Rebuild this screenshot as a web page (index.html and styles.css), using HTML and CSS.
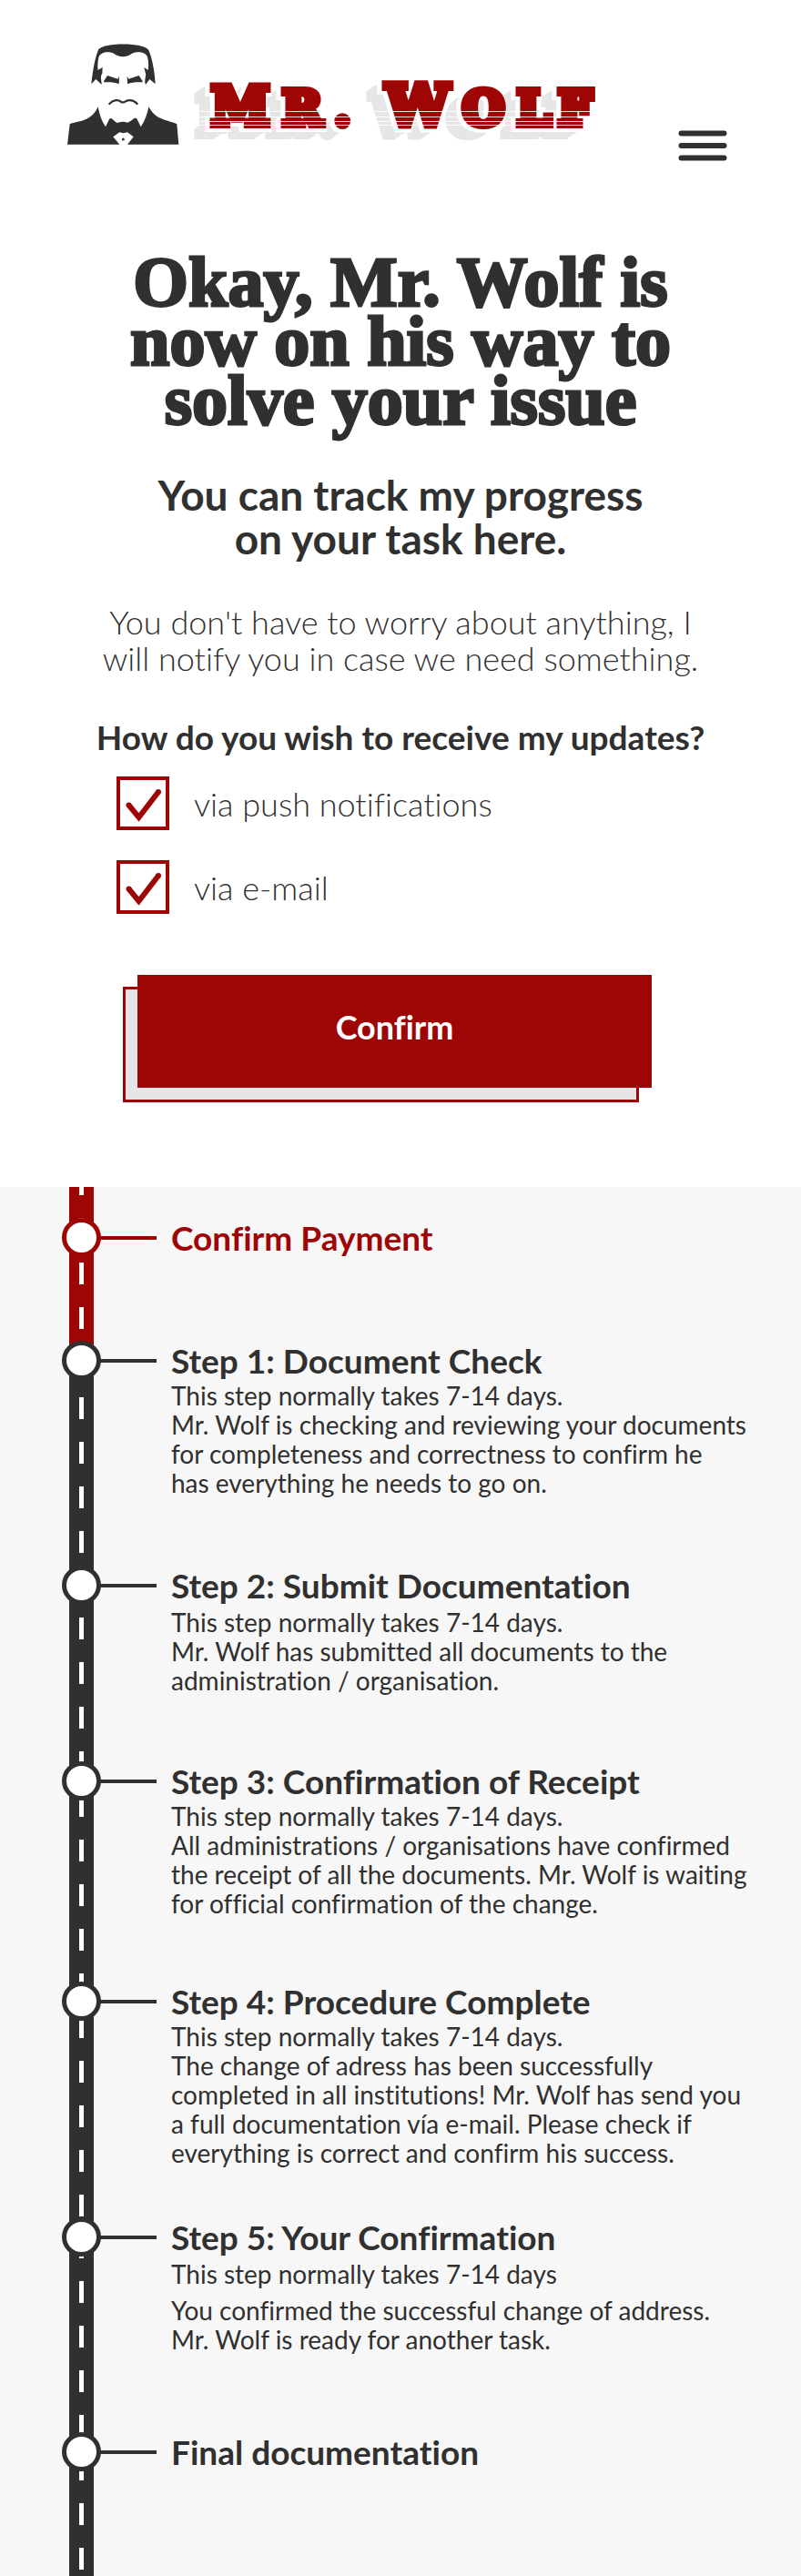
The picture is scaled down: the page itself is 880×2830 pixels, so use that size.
FILE: index.html
```html
<!DOCTYPE html>
<html lang="en">
<head>
<meta charset="utf-8">
<meta name="viewport" content="width=device-width, initial-scale=1">
<title>Mr. Wolf – Task progress</title>
<link rel="stylesheet" href="styles.css">
</head>
<body>
<header class="header">
  <a class="logo" href="#" aria-label="Mr. Wolf">
    <svg class="logo-art" viewBox="70 40 590 125" role="img" aria-label="Mr. Wolf">
      <defs>
        <text id="wordmark" class="wordmark"><tspan x="232" y="137">M</tspan><tspan class="small" x="310">R</tspan><tspan class="small" x="367">.</tspan><tspan class="big" x="424">W</tspan><tspan class="small" x="508">O</tspan><tspan class="small" x="568">L</tspan><tspan class="small" x="613">F</tspan></text>
      </defs>
      <g class="ink" transform="translate(60 40) scale(.3333)">
        <path d="M121 157C124 130 130 80 143 47C150 18 300 18 311 47C324 80 331 125 332 157L313 141L300 159C294 142 303 132 300 122L295 102L308 111C310 100 310 80 306 68C300 52 275 48 255 56C240 70 210 70 195 56C180 48 150 50 145 70C142 85 141 100 143 111L158 102L157 122C148 135 156 145 155 159L136 141Z"/>
        <path d="M162 148L174 129L208 140L213 131L212 157C195 150 178 150 162 151ZM290 148L278 129L244 140L239 131L240 157C257 150 274 150 290 151Z"/>
        <path class="mouth" d="M181 222C195 208 210 208 218 215Q226 220 234 214C250 206 262 212 272 222"/>
        <path fill-rule="evenodd" d="M50 289C80 278 120 282 143 232C148 258 155 280 168 298L180 273Q185 267 192 274Q200 283 207 285Q226 278 240 284Q250 281 258 273Q268 264 272 273L284 298C297 280 305 258 310 232C333 276 370 274 403 289L409 356H42ZM193 331L214 316Q226 321 240 316L260 331L240 356H214Z"/>
        <circle cx="226" cy="339" r="4.500"/>
      </g>
      <g class="shade">
        <use href="#wordmark" x="-7" y="5"/>
        <use href="#wordmark" x="-9" y="6"/>
        <use href="#wordmark" x="-11" y="7"/>
        <use href="#wordmark" x="-13" y="9"/>
        <use href="#wordmark" x="-15" y="10"/>
        <use href="#wordmark" x="-17" y="12"/>
      </g>
      <use class="gap" href="#wordmark" x="-2" y="1"/>
      <use class="face" href="#wordmark"/>
      <path class="stripes" d="M210 122.500H658M210 128.500H658M210 133.500H658M210 137.500H658"/>
    </svg>
  </a>
  <button class="menu" type="button" aria-label="Open menu">
    <svg viewBox="0 0 54 34" width="54" height="34" aria-hidden="true"><path d="M3.500 3.500H50.500M3.500 17H50.500M3.500 30.500H50.500"/></svg>
  </button>
</header>

<main>
  <section class="intro">
    <h1>Okay, Mr. Wolf is<br>now on his way to<br>solve your issue</h1>
    <h2>You can track my progress<br>on your task here.</h2>
    <p class="lead">You don't have to worry about anything, I<br>will notify you in case we need something.</p>
    <form class="updates">
      <fieldset>
        <legend>How do you wish to receive my updates?</legend>
        <label class="option">
          <span class="box"><input type="checkbox" checked><svg viewBox="0 0 58 58" aria-hidden="true"><path d="M13.500 31.500L24.500 45L46 17"/><circle cx="13.500" cy="31.500" r="3"/><circle cx="46" cy="17" r="3"/></svg></span>
          via push notifications
        </label>
        <label class="option">
          <span class="box"><input type="checkbox" checked><svg viewBox="0 0 58 58" aria-hidden="true"><path d="M13.500 31.500L24.500 45L46 17"/><circle cx="13.500" cy="31.500" r="3"/><circle cx="46" cy="17" r="3"/></svg></span>
          via e-mail
        </label>
      </fieldset>
      <button class="confirm" type="submit">Confirm</button>
    </form>
  </section>

  <ol class="timeline">
    <li class="step done">
      <div class="road"><span class="node"></span></div>
      <div class="info"><h3>Confirm Payment</h3></div>
    </li>
    <li class="step current">
      <div class="road"><span class="node"></span></div>
      <div class="info">
        <h3>Step 1: Document Check</h3>
        <p>This step normally takes 7-14 days.</p>
        <p>Mr. Wolf is checking and reviewing your documents<br>for completeness and correctness to confirm he<br>has everything he needs to go on.</p>
      </div>
    </li>
    <li class="step submit">
      <div class="road"><span class="node"></span></div>
      <div class="info">
        <h3>Step 2: Submit Documentation</h3>
        <p>This step normally takes 7-14 days.</p>
        <p>Mr. Wolf has submitted all documents to the<br>administration / organisation.</p>
      </div>
    </li>
    <li class="step receipt">
      <div class="road"><span class="node"></span></div>
      <div class="info">
        <h3>Step 3: Confirmation of Receipt</h3>
        <p>This step normally takes 7-14 days.</p>
        <p>All administrations / organisations have confirmed<br>the receipt of all the documents. Mr. Wolf is waiting<br>for official confirmation of the change.</p>
      </div>
    </li>
    <li class="step complete">
      <div class="road"><span class="node"></span></div>
      <div class="info">
        <h3>Step 4: Procedure Complete</h3>
        <p>This step normally takes 7-14 days.</p>
        <p>The change of adress has been successfully<br>completed in all institutions! Mr. Wolf has send you<br>a full documentation vía e-mail. Please check if<br>everything is correct and confirm his success.</p>
      </div>
    </li>
    <li class="step confirmation">
      <div class="road"><span class="node"></span></div>
      <div class="info">
        <h3>Step 5: Your Confirmation</h3>
        <p>This step normally takes 7-14 days</p>
        <p>You confirmed the successful change of address.<br>Mr. Wolf is ready for another task.</p>
      </div>
    </li>
    <li class="step final">
      <div class="road"><span class="node"></span></div>
      <div class="info"><h3>Final documentation</h3></div>
    </li>
  </ol>
</main>
</body>
</html>
```

FILE: styles.css
```css
:root {
  --ink: #303030;
  --red: #9e0505;
  --shade: #e6e6e6;
  --panel: #f7f7f7;
}

* { box-sizing: border-box; }

body {
  margin: 0;
  background: #fff;
  color: var(--ink);
  font-family: Lato, "Open Sans", sans-serif;
  font-variant-ligatures: no-common-ligatures;
}

h1, h2, h3, p, ol, fieldset { margin: 0; padding: 0; }

/* Header */
.header {
  display: flex;
  justify-content: space-between;
  align-items: flex-end;
  padding: 40px 81px 0 70px;
}

.logo { display: block; width: 590px; }
.logo-art { display: block; width: 100%; }
.ink { fill: var(--ink); }
.mouth { fill: none; stroke: var(--ink); stroke-width: 7; stroke-linecap: round; }

.wordmark {
  font-family: "DejaVu Serif", serif;
  font-weight: 700;
  font-size: 58px;
}
.wordmark .small { font-size: 53px; }
.wordmark .big { font-size: 62px; }
.face { fill: var(--red); stroke: var(--red); stroke-width: 8; }
.gap { fill: #fff; stroke: #fff; stroke-width: 14; }
.shade { fill: var(--shade); stroke: var(--shade); stroke-width: 8; }
.stripes { fill: none; stroke: #fff; stroke-width: 1; opacity: .85; }

.menu {
  margin: 0 0 -12px;
  padding: 0;
  border: 0;
  background: none;
}
.menu svg { display: block; }
.menu path { stroke: var(--ink); stroke-width: 6; stroke-linecap: round; }

/* Intro */
.intro { text-align: center; padding: 112px 40px 109px; }

h1 {
  font-family: "Liberation Serif", serif;
  font-size: 78px;
  line-height: 65px;
  -webkit-text-stroke: 3px var(--ink);
}

h2 { margin-top: 48px; font-size: 46px; line-height: 48px; }

.lead {
  margin-top: 47px;
  font-size: 36px;
  font-weight: 300;
  line-height: 40px;
}

.updates {
  display: flex;
  flex-direction: column;
  width: 670px;
  max-width: 100%;
  margin: 46px auto 0;
}

fieldset {
  display: flex;
  flex-direction: column;
  gap: 33px;
  min-width: 0;
  border: 0;
  text-align: left;
}

legend {
  width: 100%;
  padding: 0 0 22px;
  font-size: 37px;
  font-weight: 700;
  line-height: 42px;
  text-align: center;
}

.option {
  display: flex;
  align-items: center;
  gap: 27px;
  padding-left: 23px;
  font-size: 36px;
  font-weight: 300;
  line-height: 40px;
}

.box { display: grid; width: 58px; height: 59px; }
.box input, .box svg { grid-area: 1 / 1; }
.box input {
  appearance: none;
  width: 100%;
  height: 100%;
  margin: 0;
  border: 4px solid var(--red);
  background: #fff;
}
.box svg { visibility: hidden; pointer-events: none; fill: var(--red); }
.box input:checked + svg { visibility: visible; }
.box path { fill: none; stroke: var(--red); stroke-width: 6; }

.confirm {
  position: relative;
  width: 565px;
  max-width: 100%;
  height: 124px;
  margin: 67px 0 0 46px;
  padding: 0 0 10px;
  border: 0;
  background: var(--red);
  color: #fff;
  font: 700 36px/44px Lato, "Open Sans", sans-serif;
  font-variant-ligatures: no-common-ligatures;
  transform-style: preserve-3d;
}

.confirm::before {
  content: "";
  position: absolute;
  inset: 13px 14px -16px -16px;
  border: 3px solid var(--red);
  background: var(--shade);
  transform: translateZ(-1px);
}

/* Timeline */
.timeline {
  background: var(--panel);
  list-style: none;
}

.step {
  --line: var(--ink);
  --dash-at: 62px;
  --space: 75px;
  display: grid;
  grid-template-columns: 27px 1fr;
  column-gap: 85px;
  padding-left: 76px;
}

.road {
  display: flex;
  justify-content: center;
  background:
    repeating-linear-gradient(#fff 0 24px, transparent 24px 49px) 11px var(--dash-at) / 5px 490px repeat-y,
    var(--line);
}

.node {
  position: relative;
  flex: none;
  width: 43px;
  height: 43px;
  border: 5px solid var(--line);
  border-radius: 50%;
  background: #fff;
}

.node::after {
  content: "";
  position: absolute;
  left: 37px;
  top: 15px;
  width: 62px;
  height: 4px;
  background: var(--line);
}

.info { padding: 0 20px var(--space) 0; }

h3 { font-size: 37px; line-height: 44px; }
.info p { font-size: 28px; line-height: 32px; }

.done { --line: var(--red); --dash-at: 83px; --space: 91px; color: var(--red); }
.done .road, .done .info { padding-top: 34px; }

.current .road {
  background:
    repeating-linear-gradient(#fff 0 24px, transparent 24px 49px) 11px var(--dash-at) / 5px 490px repeat-y,
    linear-gradient(var(--red) 22px, var(--ink) 22px);
}

.submit { --dash-at: 57px; --space: 73px; }
.submit h3 + p, .confirmation h3 + p { margin-top: 2px; }
.receipt { --dash-at: 37px; --space: 70px; }
.complete { --dash-at: 38px; --space: 55px; }
.confirmation { --dash-at: 21px; --space: 86px; }
.confirmation p + p { margin-top: 8px; }
.final { --dash-at: 29px; --space: 114px; }
```
